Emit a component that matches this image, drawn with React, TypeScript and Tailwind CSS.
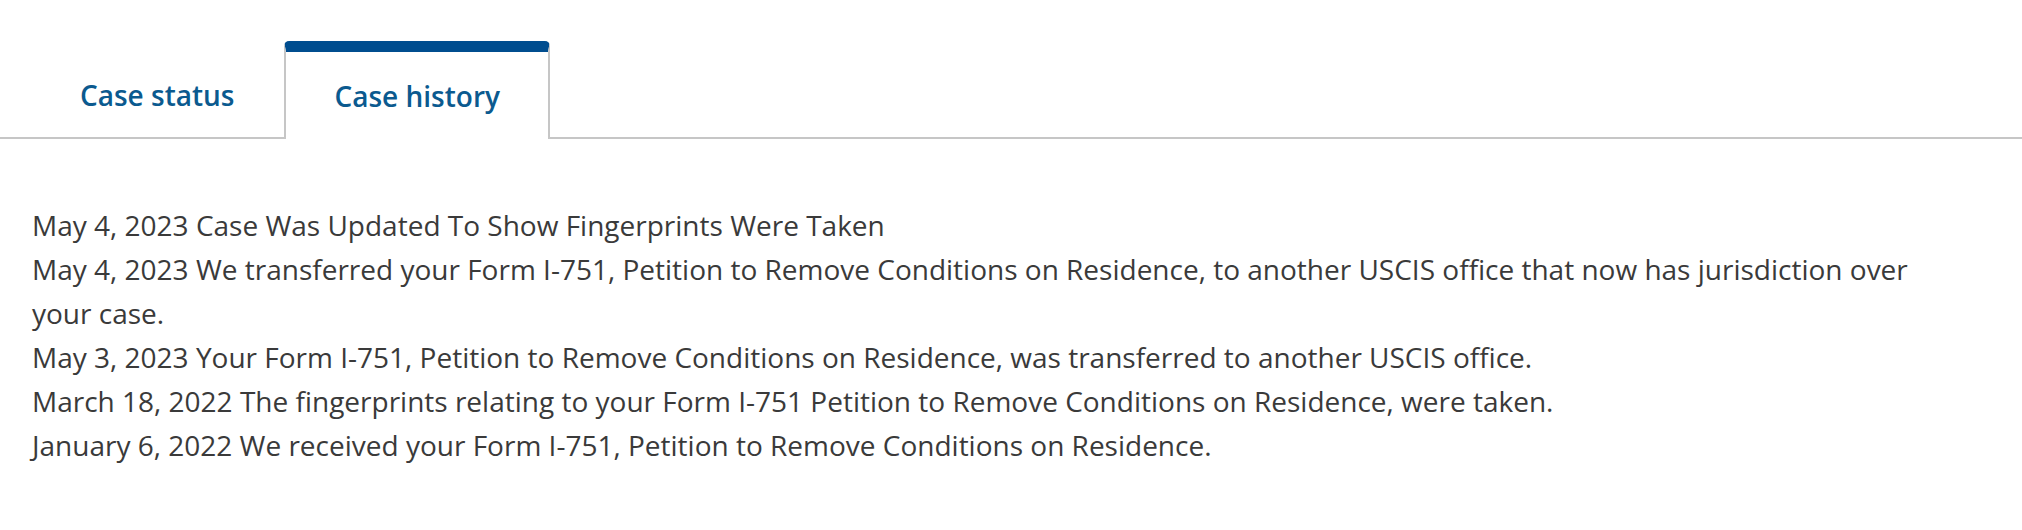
export default function App() {
  const items = [
    "May 4, 2023 Case Was Updated To Show Fingerprints Were Taken",
    "May 4, 2023 We transferred your Form I-751, Petition to Remove Conditions on Residence, to another USCIS office that now has jurisdiction over your case.",
    "May 3, 2023 Your Form I-751, Petition to Remove Conditions on Residence, was transferred to another USCIS office.",
    "March 18, 2022 The fingerprints relating to your Form I-751 Petition to Remove Conditions on Residence, were taken.",
    "January 6, 2022 We received your Form I-751, Petition to Remove Conditions on Residence.",
  ];
  return (
    <div className="min-h-[530px] bg-white font-['Open_Sans',sans-serif]">
      <div className="flex border-b-2 border-[#c6c6c6] pl-[30px] pt-[41px]">
        <button className="flex h-[96px] items-center px-[50px] pt-[11px] text-[28px] font-semibold text-[#0b5a8f]">
          Case status
        </button>
        <div className="-mb-[2px] flex h-[98px] items-center rounded-t-[5px] border-x-2 border-t-[11px] border-x-[#c6c6c6] border-t-[#004d8f] bg-white px-[48px] text-[28px] font-semibold text-[#0b5a8f]">
          Case history
        </div>
      </div>
      <div className="pl-[32px] pr-[60px] pt-[64px] text-[28px] leading-[44px] text-[#3a3a3a]">
        {items.map((t, i) => (
          <p key={i}>{t}</p>
        ))}
      </div>
    </div>
  );
}
